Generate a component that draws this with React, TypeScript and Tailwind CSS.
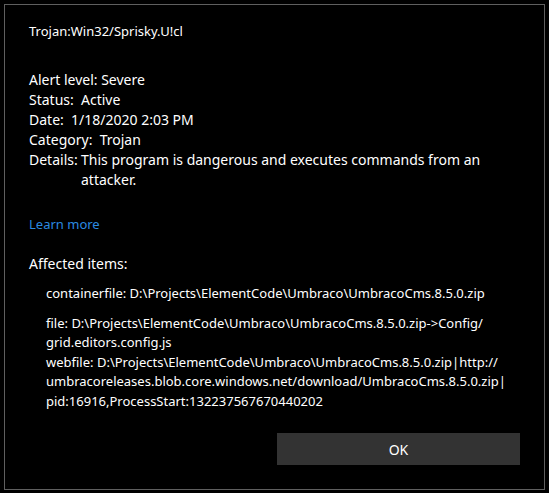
export default function App() {
  return (
    <div className="h-[493px] w-[549px] bg-black p-1 font-['Noto_Sans',sans-serif] text-white">
      <div className="flex h-[486px] flex-col border border-[#5f5f5f] pl-6 pr-6">
        <h1 className="mt-[16px] text-[13px] leading-5">Trojan:Win32/Sprisky.U!cl</h1>

        <div className="mt-[29px] text-[14px] leading-5">
          <div>Alert level: Severe</div>
          <div>Status:&nbsp; Active</div>
          <div>Date:&nbsp; 1/18/2020 2:03 PM</div>
          <div>Category:&nbsp; Trojan</div>
          <div className="flex">
            <span className="w-[52px] shrink-0">Details:</span>
            <div>
              <div className="whitespace-nowrap">This program is dangerous and executes commands from an</div>
              <div>attacker.</div>
            </div>
          </div>
        </div>

        <a href="#" className="mt-[24px] text-[13px] leading-5 text-[#2b8ae0]">
          Learn more
        </a>

        <div className="mt-[20px] text-[14px] leading-5">Affected items:</div>

        <div className="ml-[17px] text-[13px] leading-[19.5px]">
          <div className="mt-[10px]">containerfile: D:\Projects\ElementCode\Umbraco\UmbracoCms.8.5.0.zip</div>
          <div className="mt-[10px]">
            <div>file: D:\Projects\ElementCode\Umbraco\UmbracoCms.8.5.0.zip-&gt;Config/</div>
            <div>grid.editors.config.js</div>
          </div>
          <div>
            <div>webfile: D:\Projects\ElementCode\Umbraco\UmbracoCms.8.5.0.zip|http://</div>
            <div>umbracoreleases.blob.core.windows.net/download/UmbracoCms.8.5.0.zip|</div>
            <div>pid:16916,ProcessStart:132237567670440202</div>
          </div>
        </div>

        <div className="mt-auto mb-[24px] flex justify-end">
          <button className="h-[32px] w-[243px] bg-[#333333] text-[14px] text-white">OK</button>
        </div>
      </div>
    </div>
  )
}
